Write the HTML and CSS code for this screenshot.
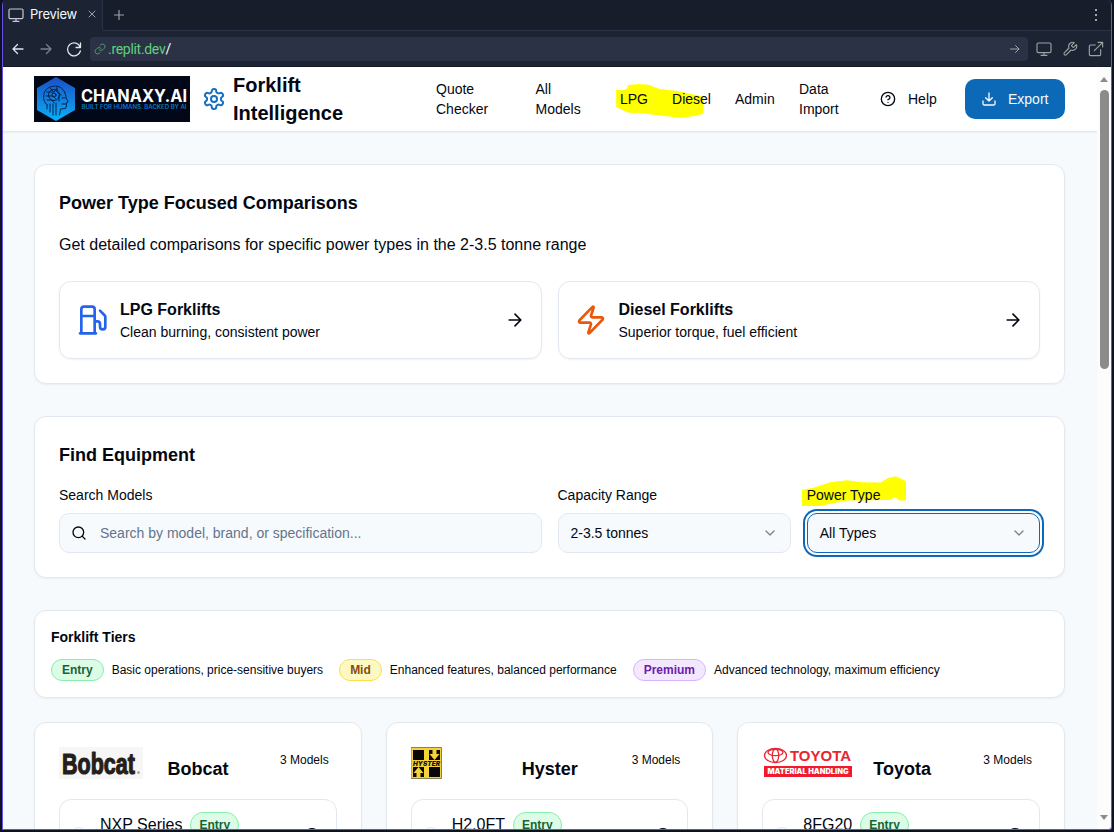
FILE: index.html
```html
<!DOCTYPE html>
<html lang="en">
<head>
<meta charset="utf-8">
<title>Forklift Intelligence</title>
<link rel="stylesheet" href="styles.css">
</head>
<body>
<div class="window">
  <div class="tabs">
    <div class="tab">
      <svg class="i16" viewBox="0 0 24 24"><rect x="1.5" y="3" width="21" height="14.5" rx="2"/><path d="M7.5 21.5h9M12 17.5v4"/></svg>
      <span class="tab-name">Preview</span>
      <svg class="close" viewBox="0 0 8 8"><path d="M1 1l6 6M7 1L1 7"/></svg>
    </div>
    <svg class="plus" viewBox="0 0 10 10"><path d="M5 .5v9M.5 5h9"/></svg>
    <svg class="kebab" viewBox="0 0 4 14"><circle cx="2" cy="2" r="1.1"/><circle cx="2" cy="7" r="1.1"/><circle cx="2" cy="12" r="1.1"/></svg>
  </div>
  <div class="toolbar">
    <svg class="nav-i" viewBox="0 0 16 16"><path d="M13 8H3M7.500 3.500L3 8l4.500 4.500"/></svg>
    <svg class="nav-i dim" viewBox="0 0 16 16"><path d="M3 8H13M8.500 3.500L13 8l-4.500 4.500"/></svg>
    <svg class="nav-i" viewBox="0 0 16 16"><path d="M14.500 2v4.500H10M14.200 6.200A6.500 6.500 0 1 0 14.400 10"/></svg>
    <div class="url">
      <svg class="link" viewBox="0 0 24 24"><path d="M10 13a5 5 0 0 0 7.540.540l3-3a5 5 0 0 0-7.070-7.070l-1.720 1.710"/><path d="M14 11a5 5 0 0 0-7.540-.540l-3 3a5 5 0 0 0 7.070 7.070l1.710-1.710"/></svg>
      <span class="host">.replit.dev</span><span class="slash">/</span>
      <svg class="go" viewBox="0 0 10 10"><path d="M.5 5h8.500M5.500 1.500L9 5 5.500 8.500"/></svg>
    </div>
    <svg class="tool" viewBox="0 0 24 24"><rect x="1.500" y="3" width="21" height="14.500" rx="2"/><path d="M7.500 21.500h9M12 17.500v4"/></svg>
    <svg class="tool" viewBox="0 0 24 24"><path d="M14.700 6.300a1 1 0 0 0 0 1.400l1.600 1.600a1 1 0 0 0 1.400 0l3.770-3.770a6 6 0 0 1-7.940 7.940l-6.910 6.910a2.120 2.120 0 0 1-3-3l6.910-6.910a6 6 0 0 1 7.940-7.940z"/></svg>
    <svg class="tool" viewBox="0 0 24 24"><path d="M19 13v7a2 2 0 0 1-2 2H4a2 2 0 0 1-2-2V8a2 2 0 0 1 2-2h7M15 2h7v7M9.500 14.500L22 2"/></svg>
  </div>
  <div class="view">
    <div class="page">
      <header class="header">
        <svg class="brand-logo" viewBox="0 0 156 46">
          <defs><linearGradient id="hex" x1="0" y1="0" x2="0" y2="1"><stop offset="0" stop-color="#1b4fc4"/><stop offset="1" stop-color="#08b1fa"/></linearGradient></defs>
          <rect class="flat" width="156" height="46" fill="#020818"/>
          <path class="flat" d="M22 1L41 12v22L22 45 3 34V12z" fill="url(#hex)"/>
          <g class="head">
            <path d="M31 17c-2-6-8-8-13-6.500C11 12 8.500 18 10 24c.6 2.500 2 4 3.500 5M31 17c1 3 1 4 1.200 5l2 4-2 1 .3 3-1 2.500-5 .5-1 6"/>
            <path d="M13 16h7l3-3M12 20h7l3 3M13 24h5l2 3M16 12l3 3M23 11v5l4 3M16 28v8M19 28v11M22 27v12M13 29v4M25 20v5"/>
            <circle cx="20" cy="19" r="5.500"/><circle cx="20" cy="19" r="2"/><path d="M28 22h3M28 28l4 0"/>
          </g>
          <text x="47" y="26" class="logo-name" textLength="106" lengthAdjust="spacingAndGlyphs">CHANAXY.AI</text>
          <text x="47.500" y="33" class="logo-sub" textLength="105" lengthAdjust="spacingAndGlyphs">BUILT FOR HUMANS. BACKED BY AI</text>
        </svg>
        <svg class="gear" viewBox="0 0 24 24"><path d="M12.220 2h-.440a2 2 0 0 0-2 2v.180a2 2 0 0 1-1 1.730l-.430.250a2 2 0 0 1-2 0l-.150-.080a2 2 0 0 0-2.730.730l-.220.380a2 2 0 0 0 .730 2.730l.150.100a2 2 0 0 1 1 1.720v.510a2 2 0 0 1-1 1.740l-.150.090a2 2 0 0 0-.730 2.730l.220.380a2 2 0 0 0 2.730.730l.150-.080a2 2 0 0 1 2 0l.430.250a2 2 0 0 1 1 1.730V20a2 2 0 0 0 2 2h.440a2 2 0 0 0 2-2v-.180a2 2 0 0 1 1-1.730l.430-.250a2 2 0 0 1 2 0l.150.080a2 2 0 0 0 2.730-.730l.220-.390a2 2 0 0 0-.730-2.730l-.150-.080a2 2 0 0 1-1-1.740v-.500a2 2 0 0 1 1-1.740l.150-.090a2 2 0 0 0 .730-2.730l-.220-.380a2 2 0 0 0-2.730-.730l-.150.080a2 2 0 0 1-2 0l-.430-.250a2 2 0 0 1-1-1.730V4a2 2 0 0 0-2-2z"/><circle cx="12" cy="12" r="3"/></svg>
        <h1 class="site">Forklift Intelligence</h1>
        <nav class="nav">
          <a class="n-quote">Quote Checker</a>
          <a class="n-all">All Models</a>
          <div class="marked">
            <svg class="mark-nav" viewBox="78 43 263 102"><path d="M78 60l22 2 12-6v-9l33-4 30 2 30 12 57 7 38 8 35 8 5 8v44l-30 8-40 4-40-4-50-6-30-4-35-1-25-11-12-6z"/></svg>
            <a>LPG</a><a>Diesel</a>
          </div>
          <a class="n-admin">Admin</a>
          <a class="n-data">Data Import</a>
        </nav>
        <div class="help">
          <svg class="i16" viewBox="0 0 24 24"><circle cx="12" cy="12" r="10"/><path d="M9.090 9a3 3 0 0 1 5.830 1c0 2-3 3-3 3M12 17h.01"/></svg>
          <span>Help</span>
        </div>
        <button class="export">
          <svg class="i16" viewBox="0 0 24 24"><path d="M21 15v4a2 2 0 0 1-2 2H5a2 2 0 0 1-2-2v-4M7 10l5 5 5-5M12 15V3"/></svg>
          <span>Export</span>
        </button>
      </header>
      <main class="main">
        <section class="card">
          <h2 class="h2">Power Type Focused Comparisons</h2>
          <p class="lead">Get detailed comparisons for specific power types in the 2-3.5 tonne range</p>
          <div class="powers">
            <div class="power">
              <svg class="i32 blue" viewBox="0 0 24 24"><path d="M3 22h12M4 9h10M14 22V4a2 2 0 0 0-2-2H6a2 2 0 0 0-2 2v18M14 13h2a2 2 0 0 1 2 2v2a2 2 0 0 0 2 2a2 2 0 0 0 2-2V9.830a2 2 0 0 0-.590-1.420L18 5"/></svg>
              <div class="power-text"><h3>LPG Forklifts</h3><p>Clean burning, consistent power</p></div>
              <svg class="i20" viewBox="0 0 24 24"><path d="M5 12h14M12 5l7 7-7 7"/></svg>
            </div>
            <div class="power">
              <svg class="i32 orange" viewBox="0 0 24 24"><path d="M4 14a1 1 0 0 1-.780-1.630l9.900-10.200a.5.5 0 0 1 .860.460l-1.920 6.020A1 1 0 0 0 13 10h7a1 1 0 0 1 .780 1.630l-9.900 10.200a.5.5 0 0 1-.860-.460l1.920-6.020A1 1 0 0 0 11 14z"/></svg>
              <div class="power-text"><h3>Diesel Forklifts</h3><p>Superior torque, fuel efficient</p></div>
              <svg class="i20" viewBox="0 0 24 24"><path d="M5 12h14M12 5l7 7-7 7"/></svg>
            </div>
          </div>
        </section>
        <section class="card">
          <h2 class="h2">Find Equipment</h2>
          <div class="fields">
            <div class="field wide"><label>Search Models</label>
              <div class="control search"><svg class="i16" viewBox="0 0 24 24"><circle cx="11" cy="11" r="8"/><path d="M21 21l-4.300-4.300"/></svg><span>Search by model, brand, or specification...</span></div>
            </div>
            <div class="field"><label>Capacity Range</label>
              <div class="control"><span>2-3.5 tonnes</span><svg class="i16 chev" viewBox="0 0 24 24"><path d="M6 9l6 6 6-6"/></svg></div>
            </div>
            <div class="field"><svg class="mark-power" viewBox="66 32 309 88"><path d="M66 72l34-6 50-16 50-6 45 6 55 1 20-13 25-6 25 12 5 6v54h-20l-13-10-12 8-80 2h-50l-50 10-30 7-20 3H66z"/></svg><label>Power Type</label>
              <div class="control focus"><span>All Types</span><svg class="i16 chev" viewBox="0 0 24 24"><path d="M6 9l6 6 6-6"/></svg></div>
            </div>
          </div>
        </section>
        <section class="card tiers">
          <h4>Forklift Tiers</h4>
          <div class="tier-row">
            <div class="tier"><span class="badge entry">Entry</span><span>Basic operations, price-sensitive buyers</span></div>
            <div class="tier"><span class="badge mid">Mid</span><span>Enhanced features, balanced performance</span></div>
            <div class="tier"><span class="badge premium">Premium</span><span>Advanced technology, maximum efficiency</span></div>
          </div>
        </section>
        <div class="brands">
          <section class="card">
            <div class="brand-head">
              <svg class="bobcat" viewBox="0 0 84 32"><rect class="flat" width="84" height="32" fill="#f6f6f6"/><text x="3" y="26.500" class="bobcat-name" textLength="73" lengthAdjust="spacingAndGlyphs">Bobcat</text><circle class="flat" cx="79.500" cy="25.500" r="1.500" fill="#aaa"/></svg>
              <h2>Bobcat</h2><span class="count">3 Models</span>
            </div>
            <div class="model"><i class="dot"></i><span>NXP Series</span><span class="badge entry">Entry</span><i class="status"></i></div>
          </section>
          <section class="card">
            <div class="brand-head">
              <svg class="hyster" viewBox="0 0 31 32"><rect x=".5" y=".5" width="30" height="31" fill="#f4d23a" stroke="#8b8052" stroke-width="1"/><path class="flat" d="M2 3h11v10H2zM18 3h11v10H18zM2 20h11v10H2zM18 20h11v10H18z" fill="#080808"/><path class="flat" d="M21.500 2h4v5h3l-5 6-5-6h3zM5.500 31h4v-5h3l-5-6-5 6h3z" fill="#f4d23a"/><text x="2" y="18.700" class="hyster-name" textLength="27" lengthAdjust="spacingAndGlyphs">HYSTER</text></svg>
              <h2>Hyster</h2><span class="count">3 Models</span>
            </div>
            <div class="model"><i class="dot"></i><span>H2.0FT</span><span class="badge entry">Entry</span><i class="status"></i></div>
          </section>
          <section class="card">
            <div class="brand-head">
              <svg class="toyota" viewBox="0 0 94 32"><g class="emblem"><ellipse cx="13.500" cy="8.500" rx="11" ry="7"/><ellipse cx="13.500" cy="5.500" rx="7.500" ry="3.200"/><ellipse cx="13.500" cy="8.500" rx="3.200" ry="6.800"/></g><text x="28" y="13.500" class="toyota-name" textLength="61" lengthAdjust="spacingAndGlyphs">TOYOTA</text><rect class="flat" x="2" y="19" width="88" height="11" fill="#ee1c2e"/><text x="5.500" y="27.200" class="toyota-sub" textLength="81" lengthAdjust="spacingAndGlyphs">MATERIAL HANDLING</text></svg>
              <h2>Toyota</h2><span class="count">3 Models</span>
            </div>
            <div class="model"><i class="dot"></i><span>8FG20</span><span class="badge entry">Entry</span><i class="status"></i></div>
          </section>
        </div>
      </main>
    </div>
    <div class="scroll"><i class="up"></i><i class="thumb"></i><i class="down"></i></div>
  </div>
</div>
</body>
</html>
```

FILE: styles.css
```css
* { box-sizing: border-box; margin: 0; padding: 0; }
body { width: 1114px; height: 832px; overflow: hidden; background: #0c1220; font-family: "Liberation Sans", Arial, sans-serif; color: #030712; font-size: 14px; line-height: 20px; }
svg { display: block; flex: none; fill: none; stroke: currentColor; stroke-width: 2; stroke-linecap: round; stroke-linejoin: round; }
svg text, svg .flat { stroke: none; }
h1, h2, h3, h4 { font-weight: 700; }
.window { display: flex; flex-direction: column; width: 1110px; height: 830px; margin-left: 2px; border: 1px solid #6a4fe8; border-top: 0; border-radius: 5px 5px 3px 0; overflow: hidden; background: #1c2333; }
.i16 { width: 16px; height: 16px; }
.i20 { width: 20px; height: 20px; }
.i32 { width: 32px; height: 32px; }

.tabs { display: flex; height: 31px; flex: none; background: #181d2c; border-bottom: 1px solid #2b3245; align-items: center; color: #c4cad4; }
.tab { display: flex; width: 100px; height: 31px; flex: none; align-items: center; padding: 0 0 3px 5px; background: #1c2333; border-right: 1px solid #2b3245; align-self: flex-start; }
.tab .i16 { stroke-width: 1.8; margin-top: 2px; }
.tab-name { font: 400 13px/16px Inter, sans-serif; color: #f5f9fc; width: 46px; margin-left: 6px; letter-spacing: -.25px; }
.close { width: 8px; height: 8px; stroke-width: 1; margin-left: 12px; color: #9da2a6; }
.plus { width: 10px; height: 10px; margin-left: 11px; stroke-width: 1.2; color: #9da2a6; }
.kebab { width: 4px; height: 14px; margin-left: auto; margin-right: 13px; fill: #c2c8cc; stroke: none; }
.toolbar { display: flex; height: 36px; flex: none; align-items: center; padding: 0 7px; color: #dfe5ea; border-bottom: 1px solid #151b29; }
.nav-i { width: 16px; height: 16px; margin-right: 12px; stroke-width: 1.3; }
.nav-i + .nav-i + .nav-i { margin-right: 8px; }
.dim { color: #7a808b; }
.url { display: flex; flex: 1; align-items: center; height: 24px; border-radius: 4px; background: #2b3245; padding: 0 8px 0 4px; font: 14px/20px Roboto, sans-serif; }
.link { width: 12px; height: 12px; color: #4b9e68; margin-right: 2px; }
.host { color: #5fd07c; letter-spacing: -.3px; }
.slash { color: #f5f9fc; }
.go { width: 10px; height: 10px; margin-left: auto; color: #9da2a6; stroke-width: 1; }
.tool { width: 16px; height: 16px; margin-left: 8px; color: #9da2a6; stroke-width: 1.7; }
.tool + .tool { margin-left: 10px; }

.view { display: flex; flex: 1; min-height: 0; }
.page { width: 1094px; flex: none; overflow: hidden; background: #f6fafd; }
.header { display: flex; align-items: center; height: 65px; padding: 0 32px 0 31px; background: #fff; border-bottom: 1px solid #e2e8f0; box-shadow: 0 1px 2px rgba(0,0,0,.05); }
.brand-logo { width: 156px; height: 46px; margin-bottom: 1px; }
.head { stroke: #06224e; stroke-width: 1; }
.logo-name { font: 700 17px Inter, sans-serif; fill: #fff; }
.logo-sub { font: 600 5.5px Inter, sans-serif; fill: #1078c0; }
.gear { width: 24px; height: 24px; margin-left: 11.5px; color: #1571bd; }
.site { width: 190px; margin-left: 7.5px; margin-right: 1px; font-size: 20px; line-height: 28px; padding-right: 70px; }
.nav { display: flex; align-items: center; flex: none; }
.n-quote { width: 60px; margin-left: 12px; }
.n-all { width: 50px; margin-left: 39.5px; }
.marked { position: relative; display: flex; gap: 24px; margin-left: 34.5px; width: 92px; }
.marked a { position: relative; }
.mark-nav, .mark-power { position: absolute; fill: #ff0; stroke: none; }
.mark-nav { left: -4px; top: -5px; width: 88px; height: 34px; }
.n-admin { margin-left: 23px; width: 40px; }
.n-data { margin-left: 24px; width: 50px; }
.help { display: flex; align-items: center; gap: 12px; margin-left: 31px; }
.export { display: flex; align-items: center; width: 100px; height: 40px; margin-left: auto; padding-left: 16px; gap: 11px; border: 0; border-radius: 10px; background: #0b69b7; color: #f5f9fc; font: 14px/20px "Liberation Sans", Arial, sans-serif; }

.main { display: flex; flex-direction: column; gap: 32px; padding: 32px 32px 0 31px; }
.card { background: #fff; border: 1px solid #e2e8f0; border-radius: 12px; padding: 24px; box-shadow: 0 1px 2px rgba(0,0,0,.05); }
.h2 { font-size: 18px; line-height: 28px; margin-bottom: 16px; }
.lead { font-size: 16px; line-height: 24px; margin-bottom: 24px; }
.powers { display: grid; grid-template-columns: 1fr 1fr; gap: 16px; }
.power { display: flex; align-items: center; height: 78px; padding: 0 16px; border: 1px solid #e2e8f0; border-radius: 12px; box-shadow: 0 1px 2px rgba(0,0,0,.05); }
.power-text { flex: 1; margin-left: 12px; }
.power h3 { font-size: 16px; line-height: 24px; }
.blue { color: #2563eb; }
.orange { color: #ea580c; }
.fields { display: grid; grid-template-columns: repeat(4, 1fr); gap: 16px; }
.field { position: relative; }
.wide { grid-column: span 2; }
.field label { display: block; position: relative; margin-bottom: 8px; }
.mark-power { left: -5px; top: -9px; width: 104px; height: 30px; }
.control { display: flex; align-items: center; height: 40px; padding: 0 12px; background: #f6fafd; border: 1px solid #e2e8f0; border-radius: 10px; }
.search span { color: #64748b; margin-left: 13px; }
.search .i16 { margin-left: -1px; }
.chev { margin-left: auto; color: #7f848a; }
.focus { position: relative; border-color: #0b69b7; box-shadow: 0 0 0 2px #fff, 0 0 0 4px #0b69b7; }
.tiers { padding: 16px; font-size: 12px; }
.tiers h4 { font-size: 14px; line-height: 20px; margin-bottom: 12px; }
.tier-row { display: flex; gap: 16px; }
.tier { display: flex; align-items: center; gap: 8px; }
.badge { display: block; height: 22px; flex: none; padding: 0 10px; border: 1px solid; border-radius: 13px; font-size: 12px; font-weight: 700; line-height: 20px; }
.entry { background: #dcfce7; border-color: #86efac; color: #166534; }
.mid { background: #fef9c3; border-color: #fde047; color: #854d0e; }
.premium { background: #f3e8ff; border-color: #d8b4fe; color: #6b21a8; }
.brands { display: grid; grid-template-columns: repeat(3, 1fr); gap: 24px; margin-top: -8px; }
.brands .card { height: 190px; }
.brand-head { display: flex; height: 52px; align-items: flex-start; }
.brand-head h2 { flex: 1; font-size: 18px; line-height: 28px; margin-top: 8px; }
.count { font-size: 12px; line-height: 16px; margin: 5px 8px 0 0; }
.bobcat { width: 84px; height: 32px; margin-right: 24.5px; }
.hyster { width: 31px; height: 32px; margin-right: 80px; }
.toyota { width: 94px; height: 32px; margin-right: 17px; }
svg .bobcat-name { font: 700 29px "Liberation Sans", sans-serif; fill: #251e1a; stroke: #251e1a; stroke-width: 1.2; }
.hyster-name { font: italic 900 6px Inter, sans-serif; fill: #111; }
.emblem { stroke: #eb2430; stroke-width: 1.3; }
.toyota-name { font: 700 15px "Liberation Sans", sans-serif; fill: #eb2430; }
.toyota-sub { font: 900 7px Inter, sans-serif; fill: #fff; }
.model { display: flex; align-items: flex-start; height: 90px; padding: 12px 16px 0 11px; border: 1px solid #e2e8f0; border-radius: 12px; font-size: 16px; line-height: 25px; }
.model .badge { height: 26px; margin-left: 8px; padding: 0 8px; line-height: 24px; }
.dot { width: 16px; height: 16px; border: 1px solid #e2e8f0; border-radius: 50%; margin: 15px 13px 0 0; }
.status { width: 16px; height: 16px; border: 2px solid #030712; border-radius: 50%; margin: 15.5px 0 0 auto; }

.scroll { display: flex; flex-direction: column; align-items: center; width: 14px; flex: none; background: #fcfcfc; }
.up, .down { border: 4px solid transparent; }
.up { margin: 10px 0 8px; border-bottom: 5px solid #8b8b8b; border-top: 0; }
.down { border-top: 5px solid #8b8b8b; border-bottom: 0; margin: auto 0 9px; }
.thumb { width: 9px; height: 279px; border-radius: 5px; background: #8b8b8b; }
```
